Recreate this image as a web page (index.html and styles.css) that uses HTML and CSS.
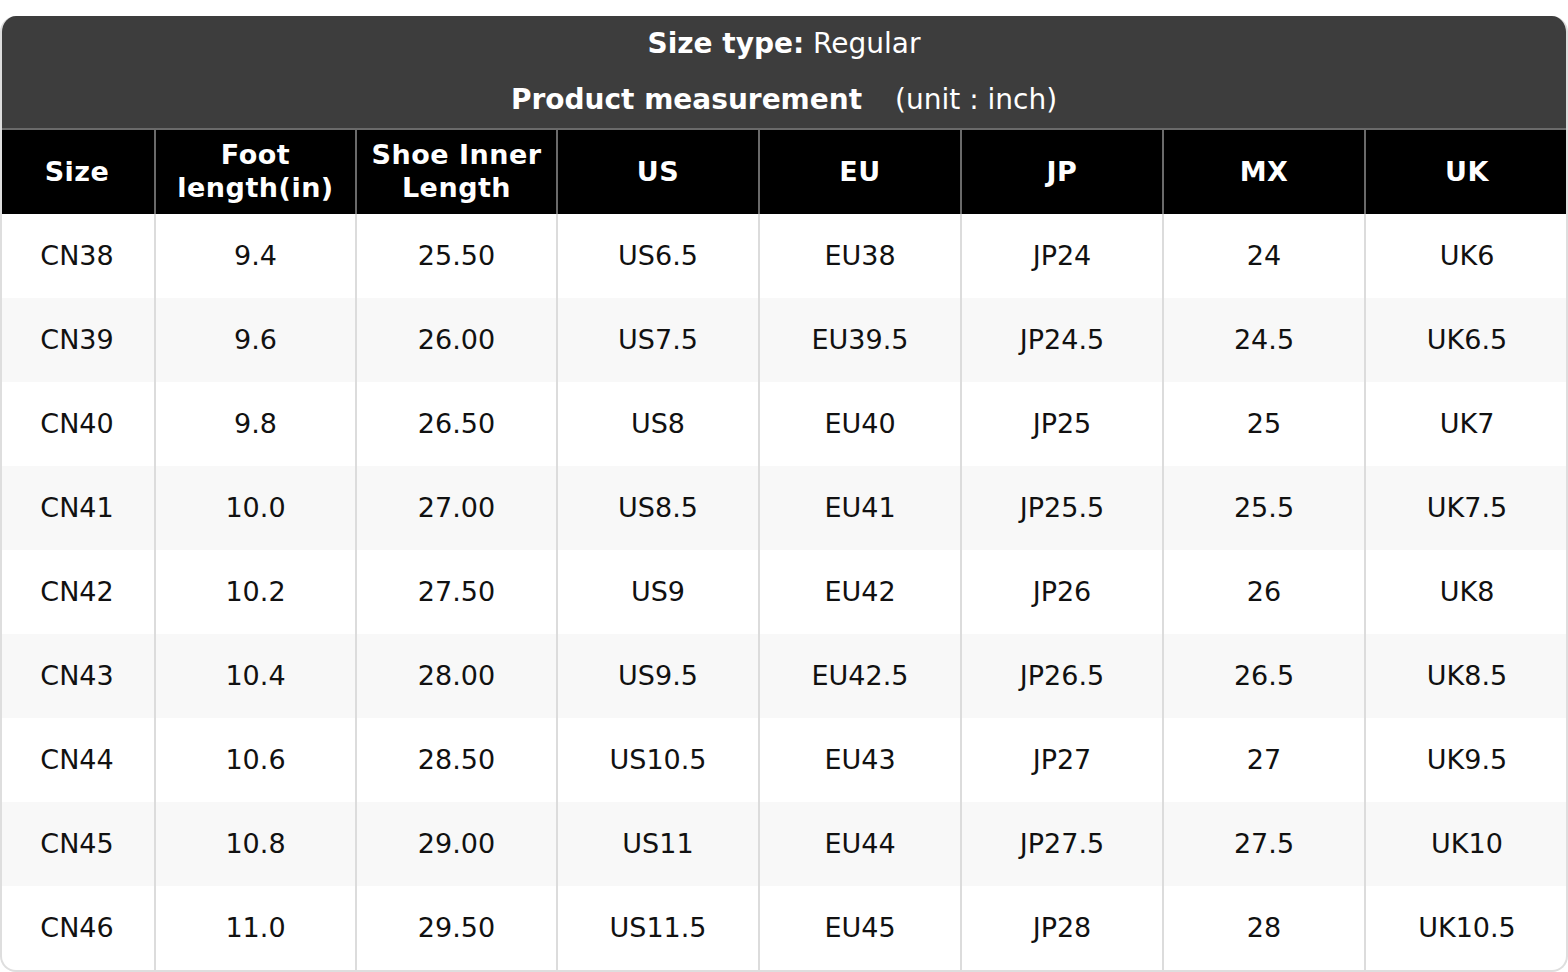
FILE: index.html
```html
<!DOCTYPE html>
<html>
<head>
<meta charset="utf-8">
<link rel="stylesheet" href="styles.css">
</head>
<body>
<div class="card">
  <div class="title">
    <div class="title-line"><b>Size type:</b> Regular</div>
    <div class="title-line"><b>Product measurement</b><span class="unit">(unit : inch)</span></div>
  </div>
  <table class="chart">
    <colgroup>
      <col class="c1"><col class="c2"><col class="c3"><col class="c4"><col class="c5"><col class="c6"><col class="c7"><col class="c8">
    </colgroup>
    <thead>
      <tr><th>Size</th><th>Foot<br>length(in)</th><th>Shoe Inner<br>Length</th><th>US</th><th>EU</th><th>JP</th><th>MX</th><th>UK</th></tr>
    </thead>
    <tbody>
      <tr><td>CN38</td><td>9.4</td><td>25.50</td><td>US6.5</td><td>EU38</td><td>JP24</td><td>24</td><td>UK6</td></tr>
      <tr><td>CN39</td><td>9.6</td><td>26.00</td><td>US7.5</td><td>EU39.5</td><td>JP24.5</td><td>24.5</td><td>UK6.5</td></tr>
      <tr><td>CN40</td><td>9.8</td><td>26.50</td><td>US8</td><td>EU40</td><td>JP25</td><td>25</td><td>UK7</td></tr>
      <tr><td>CN41</td><td>10.0</td><td>27.00</td><td>US8.5</td><td>EU41</td><td>JP25.5</td><td>25.5</td><td>UK7.5</td></tr>
      <tr><td>CN42</td><td>10.2</td><td>27.50</td><td>US9</td><td>EU42</td><td>JP26</td><td>26</td><td>UK8</td></tr>
      <tr><td>CN43</td><td>10.4</td><td>28.00</td><td>US9.5</td><td>EU42.5</td><td>JP26.5</td><td>26.5</td><td>UK8.5</td></tr>
      <tr><td>CN44</td><td>10.6</td><td>28.50</td><td>US10.5</td><td>EU43</td><td>JP27</td><td>27</td><td>UK9.5</td></tr>
      <tr><td>CN45</td><td>10.8</td><td>29.00</td><td>US11</td><td>EU44</td><td>JP27.5</td><td>27.5</td><td>UK10</td></tr>
      <tr><td>CN46</td><td>11.0</td><td>29.50</td><td>US11.5</td><td>EU45</td><td>JP28</td><td>28</td><td>UK10.5</td></tr>
    </tbody>
  </table>
</div>
</body>
</html>
```

FILE: styles.css
```css
html, body {
  margin: 0;
  padding: 0;
  background: #fff;
}
body {
  padding-top: 16px;
  font-family: "DejaVu Sans", sans-serif;
}
.card {
  width: 1568px;
  box-sizing: border-box;
  border: 2px solid #dedede;
  border-top: none;
  border-radius: 16px;
  overflow: hidden;
  background: #fff;
}
.title {
  background: #3d3d3d;
  color: #fff;
  text-align: center;
  font-size: 28px;
  height: 112px;
  box-sizing: border-box;
}
.title-line {
  height: 56px;
  line-height: 56px;
}
.unit {
  margin-left: 33px;
}
.chart {
  width: 1568px;
  margin-left: -2px;
  border-collapse: collapse;
  table-layout: fixed;
  font-size: 27px;
}
.c1 { width: 155px; }
.c2, .c3 { width: 201px; }
.c4, .c5, .c6, .c7 { width: 202px; }
.c8 { width: 203px; }
.chart th {
  background: #000;
  color: #fff;
  font-weight: bold;
  letter-spacing: 0.5px;
  line-height: 33px;
  height: 82px;
  padding: 0 0 2px 0;
  border-top: 2px solid #6a6a6a;
  border-left: 2px solid #6a6a6a;
  text-align: center;
}
.chart th:first-child { border-left: none; }
.chart td {
  height: 82px;
  padding: 0 0 2px 0;
  text-align: center;
  color: #111;
  border-left: 2px solid #dcdcdc;
}
.chart td:first-child { border-left: none; }
.chart tbody tr:nth-child(even) td { background: #f8f8f8; }
```
